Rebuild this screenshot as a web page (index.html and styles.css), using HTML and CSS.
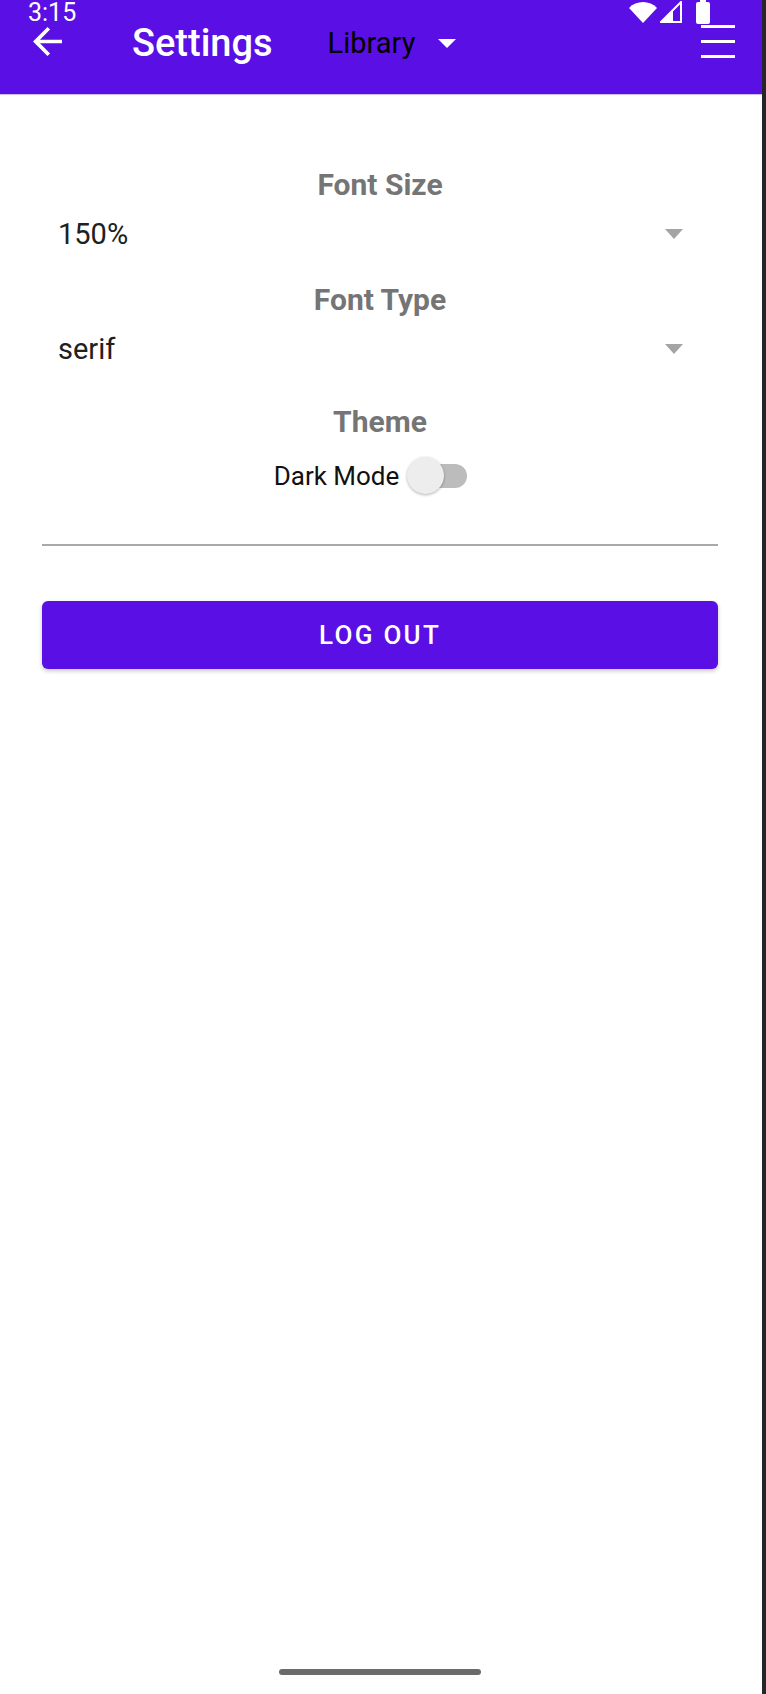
FILE: index.html
```html
<!DOCTYPE html>
<html>
<head>
<meta charset="utf-8">
<link rel="stylesheet" href="styles.css">
</head>
<body>
<div class="app">
  <header class="appbar">
    <div class="status">
      <span class="time">3:15</span>
      <div class="sys-icons">
        <svg class="wifi" width="28" height="22" viewBox="0 0 28 22"><path d="M0 7 A19.5 19.5 0 0 1 28 7 L14 22 Z" fill="#fff"/></svg>
        <svg class="signal" width="22" height="22" viewBox="0 0 22 22"><path d="M1 21 L21 1 L21 21 Z" fill="none" stroke="#fff" stroke-width="2" stroke-linejoin="miter"/><path d="M0 22 L13 9 L13 22 Z" fill="#fff"/></svg>
        <svg class="battery" width="14" height="24" viewBox="0 0 14 24"><rect x="4" y="0" width="6" height="3" fill="#fff"/><rect x="0" y="2" width="14" height="22" rx="2" fill="#fff"/></svg>
      </div>
    </div>
    <div class="toolbar">
      <svg class="back" width="29" height="29" viewBox="4 4 16 16"><path d="M20 11H7.83l5.59-5.59L12 4l-8 8 8 8 1.41-1.41L7.83 13H20v-2z" fill="#fff"/></svg>
      <h1 class="title">Settings</h1>
      <div class="lib">
        <span class="lib-text">Library</span>
        <span class="lib-caret"></span>
      </div>
      <div class="menu"><span></span><span></span><span></span></div>
    </div>
  </header>

  <main class="content">
    <div class="label">Font Size</div>
    <div class="select">
      <span class="value">150%</span>
      <span class="caret"></span>
    </div>
    <div class="label">Font Type</div>
    <div class="select">
      <span class="value">serif</span>
      <span class="caret"></span>
    </div>
    <div class="label theme">Theme</div>
    <div class="switch-row">
      <span class="switch-text">Dark Mode</span>
      <span class="switch">
        <span class="track"></span>
        <span class="thumb"></span>
      </span>
    </div>
    <hr class="divider">
    <button class="logout">LOG OUT</button>
  </main>

  <div class="home-bar"></div>
</div>
</body>
</html>
```

FILE: styles.css
```css
html, body {
  margin: 0;
  padding: 0;
}
html {
  background: #26262a;
}
body {
  width: 766px;
  height: 1694px;
  overflow: hidden;
  font-family: Roboto, "Noto Sans", sans-serif;
}
.app {
  position: relative;
  width: 762px;
  height: 1694px;
  background: #ffffff;
}
.appbar {
  position: relative;
  height: 94px;
  background: #5a0fe4;
  border-bottom: 1px solid #cdbff6;
  box-sizing: content-box;
}
.status {
  position: absolute;
  left: 0;
  top: 0;
  right: 0;
  height: 25px;
}
.time {
  position: absolute;
  left: 28px;
  top: 0;
  font-size: 25px;
  line-height: 25px;
  color: #fff;
}
.sys-icons {
  position: absolute;
  left: 629px;
  top: 0;
  display: flex;
  align-items: flex-start;
}
.wifi { margin-top: 1px; }
.signal { margin-top: 1px; margin-left: 3px; }
.battery { margin-left: 14px; }

.toolbar {
  display: flex;
  align-items: flex-start;
  height: 94px;
  padding-left: 33px;
  padding-right: 27px;
}
.back {
  margin-top: 27px;
  flex: none;
}
.title {
  margin: 24px 0 0 70px;
  font-size: 38px;
  line-height: 38px;
  font-weight: 500;
  color: #fff;
  white-space: nowrap;
}
.lib {
  display: flex;
  align-items: center;
  margin: 26px 0 0 55px;
  height: 34px;
}
.lib-text {
  font-size: 29px;
  line-height: 34px;
  color: #000;
}
.lib-caret {
  margin-left: 23px;
  width: 0;
  height: 0;
  border-left: 9px solid transparent;
  border-right: 9px solid transparent;
  border-top: 9px solid #fff;
}
.menu {
  margin: 25px 0 0 auto;
  display: flex;
  flex-direction: column;
  gap: 12px;
  width: 34px;
}
.menu span {
  display: block;
  height: 3px;
  background: #fff;
}

.content {
  padding: 72px 44px 0 42px;
}
.label {
  text-align: center;
  font-size: 30px;
  line-height: 36px;
  font-weight: 700;
  color: #757575;
}
.theme {
  margin-top: 7px;
}
.select {
  display: flex;
  align-items: center;
  height: 34px;
  padding: 14px 35px 31px 16px;
}
.value {
  flex: 1;
  font-size: 29px;
  line-height: 34px;
  color: #202020;
}
.caret {
  width: 0;
  height: 0;
  border-left: 9px solid transparent;
  border-right: 9px solid transparent;
  border-top: 10px solid #a4a4a4;
}
.switch-row {
  display: flex;
  justify-content: center;
  align-items: center;
  height: 40px;
  margin-top: 16px;
}
.switch-text {
  font-size: 26px;
  line-height: 30px;
  color: #111;
}
.switch {
  position: relative;
  width: 60px;
  height: 38px;
  margin-left: 8px;
  margin-right: 19px;
}
.track {
  position: absolute;
  left: 14px;
  top: 7px;
  width: 46px;
  height: 24px;
  border-radius: 12px;
  background: #bcbcbc;
}
.thumb {
  position: absolute;
  left: 0;
  top: 0;
  width: 37px;
  height: 37px;
  border-radius: 50%;
  background: #ededed;
  box-shadow: 0 1px 3px rgba(0,0,0,0.3);
}
.divider {
  margin: 48px 0 0 0;
  border: none;
  height: 2px;
  background: #a9a9a9;
}
.logout {
  display: block;
  width: 100%;
  height: 68px;
  margin-top: 55px;
  border: none;
  border-radius: 6px;
  background: #5a0fe4;
  color: #fff;
  font-family: Roboto, "Noto Sans", sans-serif;
  font-size: 26px;
  font-weight: 500;
  letter-spacing: 2.3px;
  box-shadow: 0 2px 4px rgba(0,0,0,0.22);
}
.home-bar {
  position: absolute;
  left: 279px;
  top: 1669px;
  width: 202px;
  height: 6px;
  border-radius: 3px;
  background: #6b6b6b;
}
```
